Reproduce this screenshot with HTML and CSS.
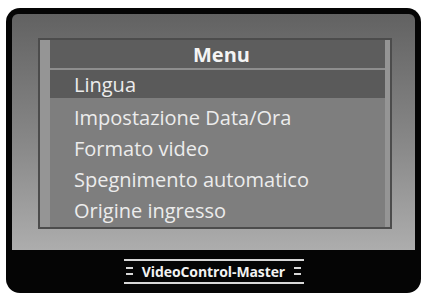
FILE: index.html
```html
<!DOCTYPE html>
<html lang="it">
<head>
    <meta charset="UTF-8">
    <title>VideoControl-Master</title>
    <link rel="stylesheet" href="styles.css">
</head>
<body>
    <div class="device">
        <div class="screen">
            <div class="panel">
                <div class="panel-inner">
                    <div class="menu-title">Menu</div>
                    <ul class="menu-list">
                        <li class="menu-item active">Lingua</li>
                        <li class="menu-item">Impostazione Data/Ora</li>
                        <li class="menu-item">Formato video</li>
                        <li class="menu-item">Spegnimento automatico</li>
                        <li class="menu-item">Origine ingresso</li>
                    </ul>
                </div>
            </div>
        </div>

        <!-- brand strip under the screen -->
        <div class="brand-bar">
            <div class="brand">
                <span class="brand-mark"></span>
                <span class="brand-name">VideoControl-Master</span>
                <span class="brand-mark"></span>
            </div>
        </div>
    </div>
</body>
</html>
```

FILE: styles.css
```css
* {
    margin: 0;
    padding: 0;
    box-sizing: border-box;
}

body {
    background: #fff;
    font-family: "Open Sans", "Noto Sans", sans-serif;
    padding: 8px 4px 0 6px;
}

.device {
    width: 415px;
    height: 285px;
    background: #050505;
    border-radius: 14px;
    padding: 6px 6px 0 6px;
    display: flex;
    flex-direction: column;
}

.screen {
    height: 236px;
    background: linear-gradient(180deg, #626262 0%, #888888 55%, #adadad 100%);
    padding: 24px 23px 21px 26px;
    border-radius: 6px 6px 0 0;
}

.panel {
    height: 100%;
    border: 2px solid #4c4c4c;
    background: #959595;
    padding: 0 5px 0 10px;
}

.panel-inner {
    height: 100%;
    background: #7e7e7e;
    overflow: hidden;
}

.menu-title {
    height: 30px;
    background: #5d5d5d;
    border-bottom: 2px solid #8e8e8e;
    color: #f4f4f4;
    font-weight: 700;
    font-size: 20px;
    line-height: 30px;
    text-align: center;
    padding-left: 8px;
}

.menu-list {
    list-style: none;
}

.menu-item {
    height: 31px;
    line-height: 30px;
    padding: 3px 0 0 24px;
    color: #ececec;
    font-size: 20px;
}

.menu-item.active {
    background: #5a5a5a;
    height: 28px;
    line-height: 28px;
    padding-top: 1px;
    margin-bottom: 2px;
}

.brand-bar {
    flex: 1;
    display: flex;
    justify-content: center;
    align-items: center;
    padding-bottom: 1px;
}

.brand {
    width: 180px;
    height: 25px;
    border-top: 2px solid #d8d8d8;
    border-bottom: 2px solid #d8d8d8;
    display: flex;
    align-items: center;
    justify-content: space-between;
    padding: 0 2px;
}

.brand-name {
    color: #f2f2f2;
    font-weight: 700;
    font-size: 14px;
    letter-spacing: -0.1px;
}

.brand-mark {
    width: 7px;
    height: 8px;
    border-top: 2px solid #d8d8d8;
    border-bottom: 2px solid #d8d8d8;
}
```
